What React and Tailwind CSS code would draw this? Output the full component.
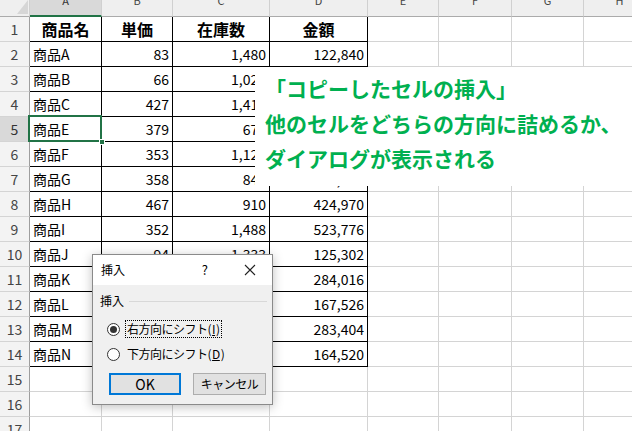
import React from 'react';

const LETTERS = ['A', 'B', 'C', 'D', 'E', 'F', 'G', 'H'];

// values hidden under the note / dialog are left blank
const DATA = [
    ['商品名', '単価', '在庫数', '金額'],
    ['商品A', '83', '1,480', '122,840'],
    ['商品B', '66', '1,020', ''],
    ['商品C', '427', '1,410', ''],
    ['商品E', '379', '670', ''],
    ['商品F', '353', '1,120', ''],
    ['商品G', '358', '840', '300,720'],
    ['商品H', '467', '910', '424,970'],
    ['商品I', '352', '1,488', '523,776'],
    ['商品J', '94', '1,333', '125,302'],
    ['商品K', '', '', '284,016'],
    ['商品L', '', '', '167,526'],
    ['商品M', '', '', '283,404'],
    ['商品N', '', '', '164,520'],
];

const FONT = { fontFamily: '"Noto Sans CJK JP", "Noto Sans", sans-serif' };

const Radio = ({ checked }) => (
    <span className="w-[13px] h-[13px] rounded-full border border-[#333] bg-white flex items-center justify-center shrink-0">
        {checked && <span className="w-[7px] h-[7px] rounded-full bg-[#333]" />}
    </span>
);

function DataCell({ r, ci }) {
    const inTable = r <= 14 && ci < 4;
    const value = inTable ? DATA[r - 1][ci] : '';
    const border = inTable ? 'border-r border-b border-black' : 'border-r border-b border-[#d4d4d4]';
    const selected = r === 5 && ci === 0;

    let align = 'justify-end pr-[3px] text-[14px]';
    if (r === 1) align = 'justify-center font-bold text-[16px]';
    else if (ci === 0) align = 'justify-start pl-[3px] text-[14px]';

    return (
        <div
            className={`relative h-[25px] flex items-center whitespace-nowrap text-black ${border} ${align} ${
                selected ? 'z-10' : 'overflow-hidden'
            }`}
        >
            {value}
            {selected && (
                <>
                    <span className="absolute -left-[2px] -top-[2px] w-[74px] h-[27px] border-2 border-[#217346]" />
                    <span className="absolute right-[-4px] bottom-[-4px] w-[6px] h-[6px] bg-[#217346] border border-white" />
                </>
            )}
        </div>
    );
}

export default function App() {
    return (
        <div className="relative w-[632px] h-[431px] overflow-hidden bg-white" style={FONT}>
            <div className="grid grid-cols-[30px_72px_71px_97px_98px_71px_73px_72px_72px] w-[656px]">
                {/* column headers */}
                <div className="relative h-[17px] bg-[#efefef] border-r border-b border-r-[#d0d0d0] border-b-[#ababab] overflow-hidden">
                    <svg width="30" height="17" className="absolute left-0 top-0">
                        <polygon points="28,0 28,14 17,14" fill="#d6d6d6" />
                    </svg>
                </div>
                {LETTERS.map((l, i) => (
                    <div
                        key={l}
                        className={
                            i === 0
                                ? 'h-[17px] bg-[#d9d9d9] border-r border-b-2 border-r-[#d0d0d0] border-b-[#217346] overflow-hidden flex justify-center text-[11px] text-[#333]'
                                : 'h-[17px] bg-[#efefef] border-r border-b border-r-[#d0d0d0] border-b-[#ababab] overflow-hidden flex justify-center text-[11px] text-[#444]'
                        }
                    >
                        <span className="block leading-[11px] -mt-[5px]">{l}</span>
                    </div>
                ))}

                {/* rows */}
                {Array.from({ length: 17 }, (_, i) => i + 1).map(r => (
                    <React.Fragment key={r}>
                        <div
                            className={
                                r === 5
                                    ? 'h-[25px] bg-[#d9d9d9] border-r border-b border-r-[#9e9e9e] border-b-[#d4d4d4] flex items-center justify-center text-[14px] text-[#333]'
                                    : 'h-[25px] bg-[#f3f3f3] border-r border-b border-r-[#9e9e9e] border-b-[#d4d4d4] flex items-center justify-center text-[14px] text-[#444]'
                            }
                        >
                            {r}
                        </div>
                        {LETTERS.map((l, ci) => (
                            <DataCell key={l} r={r} ci={ci} />
                        ))}
                    </React.Fragment>
                ))}
            </div>

            {/* annotation */}
            <div className="absolute z-20 left-[255px] top-[67px] w-[377px] h-[119px] bg-white pl-[10px] pt-[4px] text-[21px] font-bold leading-[35px] text-[#00b050] whitespace-nowrap">
                <p>「コピーしたセルの挿入」</p>
                <p>他のセルをどちらの方向に詰めるか、</p>
                <p>ダイアログが表示される</p>
            </div>

            {/* dialog */}
            <div className="absolute z-20 left-[92px] top-[254px] w-[181px] h-[151px] border border-[#8a8a8a] bg-[#f0f0f0] shadow-[0_2px_10px_rgba(0,0,0,0.25)] flex flex-col text-[12px] text-black">
                <div className="h-[30px] bg-white flex items-center pl-[8px] shrink-0">
                    <span>挿入</span>
                    <span className="ml-auto text-[13px]">?</span>
                    <svg width="12" height="12" viewBox="0 0 12 12" className="ml-[36px] mr-[16px]">
                        <path d="M1 1L11 11M11 1L1 11" stroke="#222" strokeWidth="1.1" />
                    </svg>
                </div>
                <div className="flex items-center pl-[7px] mt-[8px] h-[16px]">
                    <span className="leading-[16px]">挿入</span>
                    <span className="flex-1 h-px bg-[#d8d8d8] ml-[5px] mr-[5px]" />
                </div>
                <div className="flex items-center pl-[14px] mt-[11px] h-[18px]">
                    <Radio checked />
                    <span className="ml-[5px] px-[1px] h-[18px] flex items-center border border-dotted border-black tracking-[-0.5px]">
                        右方向にシフト(<span className="underline px-[1px]">I</span>)
                    </span>
                </div>
                <div className="flex items-center pl-[14px] mt-[7px] h-[18px]">
                    <Radio />
                    <span className="ml-[6px] px-[1px] tracking-[-0.5px]">
                        下方向にシフト(<span className="underline px-[1px]">D</span>)
                    </span>
                </div>
                <div className="flex gap-[12px] pl-[16px] mt-[10px]">
                    <button className="w-[72px] h-[22px] bg-[#e1e1e1] border-2 border-[#0078d7] text-[14px] flex items-center justify-center">
                        OK
                    </button>
                    <button className="w-[73px] h-[22px] bg-[#e1e1e1] border border-[#adadad] text-[12px] flex items-center justify-center tracking-[-0.5px]">
                        キャンセル
                    </button>
                </div>
            </div>
        </div>
    );
}
